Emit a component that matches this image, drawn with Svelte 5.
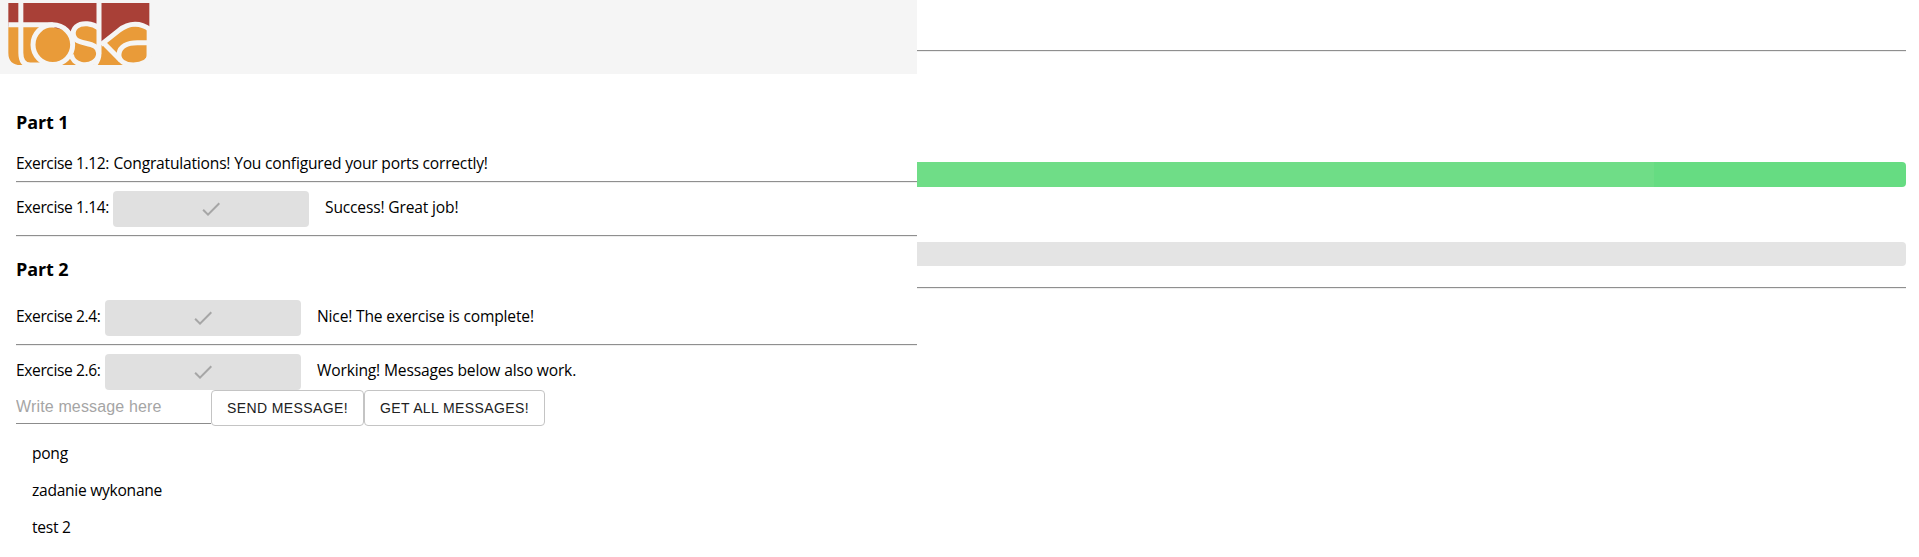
<script>
  const messages = ['pong', 'zadanie wykonane', 'test 2'];
</script>

{#snippet check()}
  <button class="done" disabled aria-label="Completed">
    <svg width="24" height="24" viewBox="0 0 24 24"><path d="M9 16.17 4.83 12l-1.42 1.41L9 19 21 7l-1.41-1.41z" /></svg>
  </button>
{/snippet}

<div class="page">
  <main>
    <header>
      <svg class="logo" width="160" height="74" viewBox="0 0 480 222" aria-label="toska">
        <path fill="#a94037" d="M25 9H448V84L405 78 305 130H220L160 80H25Z" />
        <path fill="#e99b39" d="M25 81H155L213 95 230 78H292V130H315L375 84 420 76 440 86V170L425 195H62Q25 195 25 158Z" />
        <g class="strokes">
          <path d="M62.500 8V158Q62.500 195 91 195H135" />
          <path d="M25 74H158" />
          <circle cx="158.500" cy="134" r="59.500" />
          <path d="M296 84C278 70 246 66 229 80C214 94 217 117 240 125C262 133 296 132 296 160C296 184 270 198 244 193C228 190 216 178 214 164" />
          <path d="M297 8V160Q297 178 284 196" />
          <path d="M303 134L357 91C388 66 423 68 449 88" />
          <path d="M308 126L362 181" />
          <path d="M442 128H412C382 128 360 139 357 161C354 182 375 195 400 195C428 195 448 183 448 165V132" />
        </g>
      </svg>
    </header>

    <section class="part one">
      <h3>Part 1</h3>
      <div class="row plain"><span class="label inline">Exercise 1.12: </span><span class="sentence">Congratulations! You configured your ports correctly!</span></div>
      <hr />
      <div class="row"><span class="label wide">Exercise 1.14:</span>{@render check()}<span class="result">Success! Great job!</span></div>
      <hr />
    </section>

    <section class="part two">
      <h3>Part 2</h3>
      <div class="row"><span class="label">Exercise 2.4:</span>{@render check()}<span class="result">Nice! The exercise is complete!</span></div>
      <hr />
      <div class="row"><span class="label">Exercise 2.6:</span>{@render check()}<span class="result">Working! Messages below also work.</span></div>
      <div class="form">
        <input placeholder="Write message here" />
        <button class="send">SEND MESSAGE!</button>
        <button class="get">GET ALL MESSAGES!</button>
      </div>
      <ul>
        {#each messages as message}
          <li>{message}</li>
        {/each}
      </ul>
    </section>
  </main>

  <aside>
    <hr />
    <div class="bar green"></div>
    <div class="bar gray"></div>
    <hr />
  </aside>
</div>

<style>
  :global(body) { background: #fff; }
  .page {
    display: grid;
    grid-template-columns: 917px 1fr;
    height: 557px;
    overflow: hidden;
    font: 15.6px/24px "Open Sans", "Noto Sans", sans-serif;
    color: #000;
  }
  header { height: 74px; background: #f5f5f5; }
  .logo { display: block; }
  .strokes { fill: none; stroke: #f5f5f5; stroke-width: 15; }
  .part { padding-left: 16px; }
  .one { padding-top: 35px; }
  .two { padding-top: 19px; }
  h3 { margin: 0; padding-bottom: 1px; font-size: 18px; line-height: 26px; letter-spacing: -0.1px; }
  hr {
    margin: 0;
    border: 0;
    height: 1px;
    background: #8f8f8f;
    border-bottom: 1px solid #eee;
  }
  .row { display: flex; align-items: flex-start; height: 36px; padding: 8px 0; white-space: nowrap; }
  .row span { padding-top: 4px; }
  .row.plain { height: 24px; padding: 15px 0 6px; }
  .row.plain span { padding: 0; }
  .two h3 + .row { padding-top: 17px; }
  .two hr + .row { padding-bottom: 0; }
  .sentence { letter-spacing: -0.2px; }
  .label { width: 89px; letter-spacing: -0.4px; }
  .label.wide { width: 97px; }
  .label.inline { width: 97.500px; }
  .result { margin-left: 16px; letter-spacing: -0.17px; }
  button { box-sizing: border-box; height: 36px; border-radius: 4px; padding: 0; }
  .done {
    width: 196px;
    border: 0;
    background: #e0e0e0;
    display: flex;
    align-items: center;
    justify-content: center;
  }
  .done svg { fill: #a6a6a6; }
  .form { display: flex; height: 36px; }
  input {
    box-sizing: border-box;
    width: 195px;
    height: 34px;
    border: 0;
    border-bottom: 1px solid #8c8c8c;
    padding: 0;
    background: none;
    font: 16px "Liberation Sans", Arial, sans-serif;
    letter-spacing: 0.15px;
  }
  input::placeholder { color: #a5a5a5; opacity: 1; }
  .send, .get {
    width: 153px;
    border: 1px solid #c4c4c4;
    background: #fff;
    color: #212121;
    font: 14px "Liberation Sans", Arial, sans-serif;
    letter-spacing: 0.4px;
  }
  .get { width: 181px; }
  ul { margin: 0; padding: 9px 0 0 16px; list-style: none; }
  li { height: 37px; line-height: 37px; letter-spacing: -0.28px; }
  aside { padding: 50px 13px 0 0; }
  .bar { border-radius: 0 4px 4px 0; }
  .green {
    height: 25px;
    margin-top: 110px;
    background: linear-gradient(90deg, #6fdd87 737px, #66dc82 737px);
  }
  .gray { height: 24px; margin: 55px 0 21px; background: #e4e4e4; }
</style>
